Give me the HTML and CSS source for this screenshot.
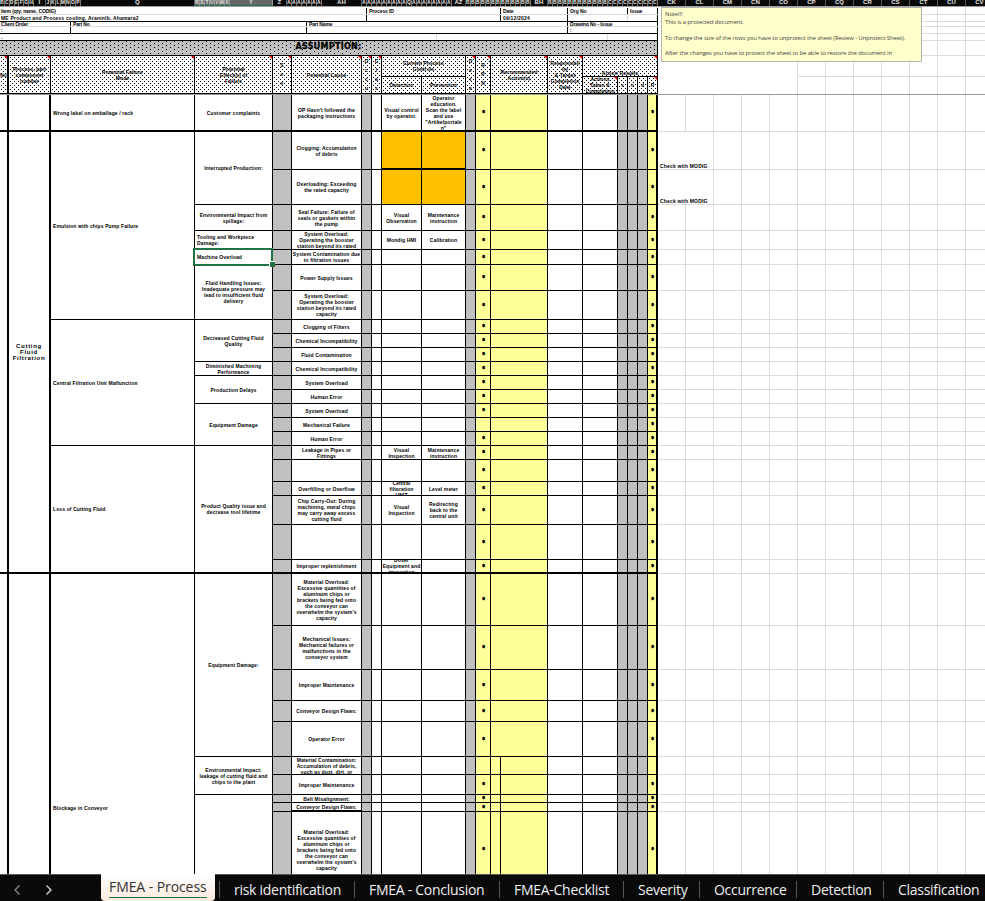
FILE: index.html
```
<!DOCTYPE html>
<html lang="en">
<head>
    <meta charset="UTF-8">
    <title>FMEA - Process</title>
    <link rel="stylesheet" href="styles.css">
</head>
<body>
    <div class="app">
        <div class="col-heads" id="col-heads"></div>

        <div class="top">
            <div class="form">
                <div class="form-row r1">
                    <div>Item (qty, name, CODIG)</div><div>Process ID</div><div>Date</div><div>Org No</div><div>Issue</div>
                </div>
                <div class="form-row r2">
                    <div class="wide">ME Product and Process cooling, Araninlb, Ahamara2</div><div></div><div class="wide">09/12/2024</div><div class="soft"></div><div></div>
                </div>
                <div class="form-row r3">
                    <div>Client Order</div><div>Part No</div><div>Part Name</div><div>Drawing No - Issue</div>
                </div>
                <div class="form-row r4">
                    <div>:</div><div></div><div></div><div>:</div>
                </div>
                <div class="form-row r5">
                    <div>.</div><div></div><div></div>
                </div>
                <div class="assumption">ASSUMPTION:</div>
                <div class="head" id="head"></div>
            </div>
            <div class="empty">
                <div class="line" style="height: 8px"></div>
                <div class="line" style="height: 7px"></div>
                <div class="line" style="height: 5px"></div>
                <div class="line" style="height: 7px"></div>
                <div class="line" style="height: 7px"></div>
                <div class="line" style="height: 15px"></div>
                <div class="line" style="height: 21px"></div>
                <div class="line last" style="height: 17px"></div>
                <div class="merged"></div>
                <div class="note">
                    <p>Note!!!</p>
                    <p>This is a protected document.</p>
                    <p class="gap">To change the size of the rows you have to unprotect the sheet (Review - Unprotect Sheet).</p>
                    <p class="gap">After the changes you have to protect the sheet to be able to restore the document in</p>
                </div>
            </div>
        </div>

        <div class="body">
            <div class="grid" id="grid"></div>
            <div class="side" id="side"></div>
        </div>

        <div class="tabs">
            <div class="arrows">
                <svg width="8" height="12" viewBox="0 0 8 12"><path d="M6.5 1.5 2 6l4.500 4.500" fill="none" stroke="#8a8a8a" stroke-width="1.300"/></svg>
                <svg width="8" height="12" viewBox="0 0 8 12"><path d="M1.500 1.500 6 6l-4.500 4.500" fill="none" stroke="#d0d0d0" stroke-width="1.400"/></svg>
            </div>
            <div class="tab active"><span>FMEA - Process</span></div>
            <div class="tab t1">risk identification</div>
            <div class="tab t2">FMEA - Conclusion</div>
            <div class="tab t3">FMEA-Checklist</div>
            <div class="tab t4">Severity</div>
            <div class="tab t5">Occurrence</div>
            <div class="tab t6">Detection</div>
            <div class="tab t7">Classification</div>
        </div>
    </div>
    <script src="script.js"></script>
</body>
</html>
```
FILE: styles.css
```
body {
    margin: 0;
    background: #fff;
    font-family: "Liberation Sans", Arial, sans-serif;
    color: #000;
}
.app {
    width: 985px;
    height: 901px;
    overflow: hidden;
    display: flex;
    flex-direction: column;
}

/* column letters */
.col-heads {
    display: flex;
    flex: none;
    height: 6px;
    overflow: hidden;
    background: #0a0a0a;
    border-bottom: 1px solid #a0a0a0;
}
.col-heads div {
    flex: none;
    box-sizing: border-box;
    height: 6px;
    overflow: hidden;
    display: flex;
    justify-content: center;
    border-right: 1px solid #555;
    color: #e4e4e4;
    font-size: 6px;
    font-weight: bold;
    line-height: 4px;
}
.col-heads .narrow {
    border-right-color: #777;
    font-size: 5px;
}
.col-heads .sel {
    background: #666;
    border-right-color: #999;
    border-bottom: 1px solid #217346;
    font-size: 5px;
}

/* frozen part */
.top {
    display: flex;
    flex: none;
    height: 87px;
    border-bottom: 1px solid #999;
}
.form {
    width: 658px;
    font-size: 5px;
    font-weight: bold;
}
.form-row {
    display: grid;
    box-sizing: border-box;
    border-bottom: 1px solid #000;
    line-height: 6px;
}
.form-row div {
    border-right: 1px solid #000;
    padding-left: 2px;
    overflow: hidden;
    white-space: nowrap;
}
.form-row div:first-child {
    padding-left: 1px;
}
.r1, .r2 {
    grid-template-columns: 367px 134px 67px 60px 30px;
}
.r3, .r4 {
    grid-template-columns: 71px 236px 261px 90px;
}
.r1 {
    height: 8px;
    border-bottom-color: #dcdcdc;
    padding-top: 1px;
    letter-spacing: -0.1px;
}
.r2 {
    height: 7px;
}
.r2 .soft {
    border-right-color: #dcdcdc;
}
.r2 .wide {
    letter-spacing: 0.2px;
}
.r3 {
    height: 5px;
    line-height: 5px;
    border-bottom-color: #dcdcdc;
    letter-spacing: -0.15px;
}
.r4 {
    height: 7px;
}
.r5 {
    height: 7px;
    grid-template-columns: 437px 171px 50px;
}
.r5 div {
    border-right-color: #dcdcdc;
}
.r5 div:last-child {
    border-right-color: #000;
}
.assumption {
    box-sizing: border-box;
    height: 15px;
    border-bottom: 1px solid #000;
    border-right: 1px solid #000;
    background-color: #c0c0c0;
    background-image:
        conic-gradient(at 1px 1px, transparent 75%, #000 0),
        conic-gradient(at 1px 1px, transparent 75%, #000 0);
    background-size: 8px 4px;
    background-position: 2px 2px, 6px 4px;
    font-size: 8px;
    font-weight: bold;
    font-family: "DejaVu Sans", sans-serif;
    line-height: 11px;
    letter-spacing: 0.3px;
    text-align: center;
    -webkit-text-stroke: 0.3px #000;
}

.head, .grid {
    display: grid;
    grid-template-columns: 9px 42px 144px 78px 19px 70px 10px 10px 40px 44px 10px 15px 57px 35px 35px 10px 10px 10px 10px;
}
.head {
    height: 38px;
    grid-template-rows: 21px 17px;
}
.cell {
    box-sizing: border-box;
    min-width: 0;
    min-height: 0;
    overflow: hidden;
    display: flex;
    align-items: center;
    justify-content: center;
    border-right: 1px solid #000;
    border-bottom: 1px solid #000;
    font-size: 5px;
    font-weight: bold;
    line-height: 6px;
    letter-spacing: 0.12px;
    text-align: center;
    white-space: pre;
}
.cell.left {
    justify-content: flex-start;
    text-align: left;
    padding-left: 2px;
}
.cell.thick {
    border-right-width: 2px;
}
.cell.heavy {
    border-bottom-width: 2px;
}
.head .cell {
    position: relative;
    background-color: #fff;
    background-image:
        conic-gradient(at 1px 1px, transparent 75%, #000 0),
        conic-gradient(at 1px 1px, transparent 75%, #000 0);
    background-size: 4px 4px;
    background-position: 1px 1px, 3px 3px;
}
.head .low {
    align-items: flex-end;
}
.head .spread {
    line-height: 9px;
}
.red::after {
    content: "";
    position: absolute;
    top: 0;
    right: 0;
    border-top: 3px solid #f00;
    border-left: 3px solid transparent;
}

/* sheet rows */
.body {
    display: flex;
    flex: none;
    height: 779px;
    overflow: hidden;
}
.grid {
    position: relative;
    flex: none;
    width: 658px;
    align-content: start;
}
.gray {
    background: #c0c0c0;
}
.yellow {
    background: #ffff99;
}
.orange {
    background: #ffc000;
}
.cell.title {
    font-size: 6px;
    letter-spacing: 0.7px;
}
.cell.zero {
    padding: 0 0 1px 1px;
    font-size: 4px;
    line-height: 4px;
    letter-spacing: 0;
    -webkit-text-stroke: 0.6px #000;
}
.split::before {
    content: "";
    align-self: stretch;
    width: 9px;
    margin-right: auto;
    border-right: 1px solid #000;
}
.cell.picked {
    position: relative;
    overflow: visible;
}
.picked::before {
    content: "";
    position: absolute;
    inset: -2px -1px -2px -2px;
    border: 2px solid #217346;
}
.picked::after {
    content: "";
    position: absolute;
    right: -3px;
    bottom: -3px;
    width: 5px;
    height: 5px;
    background: #217346;
    border: solid #fff;
    border-width: 1px 0 0 1px;
}

/* cells right of the form */
.empty, .side {
    position: relative;
    width: 327px;
    overflow: hidden;
}
.line, .side div {
    box-sizing: border-box;
    border-bottom: 1px solid #dcdcdc;
    background: repeating-linear-gradient(90deg, transparent 0 27px, #dcdcdc 27px 28px);
}
.line.last {
    border-bottom: 0;
}
.merged {
    position: absolute;
    left: 0;
    top: 0;
    width: 139px;
    height: 87px;
    background: #fff;
}
.note {
    position: absolute;
    left: 3px;
    top: 0;
    box-sizing: border-box;
    width: 261px;
    height: 55px;
    padding: 2px 3px;
    border: 1px solid #b4b4b4;
    background: #ffffcc;
    color: #444;
    font-family: "Open Sans", sans-serif;
    font-size: 6px;
    line-height: 8px;
    letter-spacing: -0.14px;
    white-space: nowrap;
}
.note p {
    margin: 0;
}
.note .gap {
    margin-top: 7.5px;
}
.side .comment {
    display: flex;
    align-items: flex-end;
    padding: 0 0 0 2px;
    background: repeating-linear-gradient(90deg, transparent 0 27px, #dcdcdc 27px 28px) 28px 0 no-repeat;
    font-size: 5px;
    font-weight: bold;
    line-height: 6px;
    letter-spacing: 0.18px;
}

/* sheet tabs */
.tabs {
    display: flex;
    flex: none;
    height: 27px;
    box-sizing: border-box;
    border-top: 1px solid #555;
    background: #0a0a0a;
    color: #f0f0f0;
    font-family: "Open Sans", "Noto Sans", sans-serif;
    font-size: 14px;
    letter-spacing: -0.28px;
}
.arrows {
    flex: none;
    width: 88px;
    padding: 3px 0 0 13px;
    display: flex;
    align-items: center;
    gap: 24px;
}
.tab {
    position: relative;
    flex: none;
    box-sizing: border-box;
    padding: 4px 0 0 15px;
    line-height: 22px;
    white-space: nowrap;
}
.tab::before {
    content: "";
    position: absolute;
    left: 0;
    top: 6px;
    height: 17px;
    border-left: 1px solid #555;
}
.tab.active {
    width: 114px;
    height: 27px;
    margin: -1px 4px 0 0;
    padding: 0 0 0 8px;
    border-radius: 0 0 4px 4px;
    background: linear-gradient(#fff, #fde9dd);
    color: #333;
    line-height: 26px;
    letter-spacing: -0.08px;
}
.tab.active::before {
    display: none;
}
.tab.active span {
    display: block;
    width: 98px;
    height: 23px;
    border-bottom: 1px solid #217346;
}
.t1 { width: 135px; }
.t2 { width: 145px; }
.t3 { width: 124px; }
.t4 { width: 76px; }
.t5 { width: 97px; }
.t6 { width: 87px; }
.t7 { width: 102px; }
```
FILE: script.js
```
const el = id => document.getElementById(id);

// column letters: [labels, width of each, extra class]
const heads = [
    ["B C D E F G H", 34 / 7, "narrow"], ["I", 12, ""], ["J K L M N O P", 5, "narrow"], ["Q", 114, ""],
    ["R S T U V W X", 5, "sel"], ["Y", 43, "sel"], ["Z", 14, ""],
    ["A A A A A A A", 5, "narrow"], ["AH", 40, ""],
    ["A A A A A A A A A Q A A A A A A A A", 5, "narrow"], ["AZ", 14, ""],
    ["B B B B B B B B B B B B B", 5, "narrow"], ["BH", 17, ""],
    ["B B B B B B B B B B B B C C C C C C C C C C", 5, "narrow"],
    ["CK CL CM CN CO CP CQ CR CS CT CU CV", 28, ""]
];
heads.forEach(([labels, width, cls]) => {
    labels.split(" ").forEach(label => {
        const div = document.createElement("div");
        div.textContent = label;
        div.className = cls;
        div.style.width = width + "px";
        el("col-heads").appendChild(div);
    });
});

function addCell(parent, row, rows, col, cols, text, cls) {
    const div = document.createElement("div");
    div.className = "cell " + (cls || "");
    div.textContent = text;
    div.style.gridArea = `${row} / ${col} / span ${rows} / span ${cols}`;
    parent.appendChild(div);
}

// table head
[
    [1, 2, 1, 1, "No", "red thick"],
    [1, 2, 2, 1, "Process, part\ncomponent\nnumber", "red"],
    [1, 2, 3, 1, "Potential Failure\nMode", "red"],
    [1, 2, 4, 1, "Potential\nEffect(s) of\nFailure", "red"],
    [1, 2, 5, 1, "S\ne\nv", "red spread"],
    [1, 2, 6, 1, "Potential Cause", "red"],
    [1, 2, 7, 1, "O\nc\nc\nu", "red spread"],
    [1, 2, 8, 1, "C\nl\na\ns", "red spread"],
    [1, 1, 9, 2, "Current Process\nControls", ""],
    [2, 1, 9, 1, "Detection", ""],
    [2, 1, 10, 1, "Prevention", ""],
    [1, 2, 11, 1, "D\ne\nt\ne", "red spread"],
    [1, 2, 12, 1, "R\nP\nN", "red spread"],
    [1, 2, 13, 1, "Recommended\nAction(s)", "red"],
    [1, 2, 14, 1, "Responsibil\nity\n& Target\nCompletion\nDate", "red"],
    [1, 1, 15, 5, "Action Results", "red low"],
    [2, 1, 15, 1, "Actions\nTaken &\nCompletion", "red"],
    [2, 1, 16, 1, "s", ""],
    [2, 1, 17, 1, "o", ""],
    [2, 1, 18, 1, "d", ""],
    [2, 1, 19, 1, "P", "red"]
].forEach(([row, rows, col, cols, text, cls]) => addCell(el("head"), row, rows, col, cols, text, cls));

// [height, cause, detection, prevention]
const rows = [
    [37, "OP Hasn't followed the\npackaging instructions", "Visual control\nby operator.", "Operator\neducation.\nScan the label\nand use\n\"Artikelportale\nn\""],
    [38, "Clogging: Accumulation\nof debris", "", ""],
    [35, "Overloading: Exceeding\nthe rated capacity", "", ""],
    [26, "Seal Failure: Failure of\nseals or gaskets within\nthe pump", "Visual\nObservation", "Maintenance\ninstruction"],
    [19, "System Overload:\nOperating the booster\nstation beyond its rated", "Mondig HMI", "Calibration"],
    [15, "System Contamination due\nto filtration issues", "", ""],
    [26, "Power Supply Issues", "", ""],
    [29, "System Overload:\nOperating the booster\nstation beyond its rated\ncapacity", "", ""],
    [14, "Clogging of Filters", "", ""],
    [14, "Chemical Incompatibility", "", ""],
    [14, "Fluid Contamination", "", ""],
    [14, "Chemical Incompatibility", "", ""],
    [14, "System Overload", "", ""],
    [14, "Human Error", "", ""],
    [14, "System Overload", "", ""],
    [14, "Mechanical Failure", "", ""],
    [14, "Human Error", "", ""],
    [14, "Leakage in Pipes or\nFittings", "Visual\nInspection", "Maintenance\ninstruction"],
    [22, "", "", ""],
    [14, "Overfilling or Overflow", "Central\nfilteration\nUNIT", "Level meter"],
    [29, "Chip Carry-Out: During\nmachining, metal chips\nmay carry away excess\ncutting fluid", "Visual\nInspection", "Redirecting\nback to the\ncentral unit"],
    [35, "", "", ""],
    [14, "Improper replenishment", "Doser\nEquipment and\ninspection", ""],
    [52, "Material Overload:\nExcessive quantities of\naluminum chips or\nbrackets being fed onto\nthe conveyor can\noverwhelm the system's\ncapacity", "", ""],
    [44, "Mechanical Issues:\nMechanical failures or\nmalfunctions in the\nconveyor system", "", ""],
    [31, "Improper Maintenance", "", ""],
    [21, "Conveyor Design Flaws:", "", ""],
    [35, "Operator Error", "", ""],
    [18, "Material Contamination:\nAccumulation of debris,\nsuch as dust, dirt, or", "", ""],
    [20, "Improper Maintenance", "", ""],
    [8, "Belt Misalignment:", "", ""],
    [9, "Conveyor Design Flaws:", "", ""],
    [76, "Material Overload:\nExcessive quantities of\naluminum chips or\nbrackets being fed onto\nthe conveyor can\noverwhelm the system's\ncapacity", "", ""],
    [154, "", "", ""]
];
const grid = el("grid");
grid.style.gridTemplateRows = rows.map(r => r[0] + "px").join(" ");

// merged cells: [first row, row count, column, text, class]
[
    [1, 1, 1, "", "thick heavy"],
    [2, 22, 1, "", "thick heavy"],
    [24, 11, 1, "", "thick"],
    [1, 1, 2, "", "thick heavy"],
    [2, 22, 2, "Cutting\nFluid\nFiltration", "thick heavy title"],
    [24, 11, 2, "", "thick"],
    [1, 1, 3, "Wrong label on emballage / rack", "left heavy"],
    [2, 7, 3, "Emulsion with chips Pump Failure", "left"],
    [9, 9, 3, "Central Filtration Unit Malfunction", "left"],
    [18, 6, 3, "Loss of Cutting Fluid", "left heavy"],
    [24, 11, 3, "Blockage in Conveyor", "left"],
    [1, 1, 4, "Customer complaints", "heavy"],
    [2, 2, 4, "Interrupted Production:", ""],
    [4, 1, 4, "Environmental Impact from\nspillage:", ""],
    [5, 1, 4, "Tooling and Workpiece\nDamage:", "left"],
    [7, 2, 4, "Fluid Handling Issues:\nInadequate pressure may\nlead to insufficient fluid\ndelivery", ""],
    [9, 3, 4, "Decreased Cutting Fluid\nQuality", ""],
    [12, 1, 4, "Diminished Machining\nPerformance", ""],
    [13, 2, 4, "Production Delays", ""],
    [15, 3, 4, "Equipment Damage", ""],
    [18, 6, 4, "Product Quality issue and\ndecrease tool lifetime", "heavy"],
    [24, 5, 4, "Equipment Damage:", ""],
    [29, 2, 4, "Environmental Impact:\nleakage of cutting fluid and\nchips to the plant", ""],
    [31, 4, 4, "", ""]
].forEach(([row, count, col, text, cls]) => addCell(grid, row, count, col, 1, text, cls));

rows.forEach(([height, cause, detection, prevention], i) => {
    const n = i + 1;
    const end = n === 1 || n === 23 ? " heavy" : "";
    const orange = n === 2 ? " orange heavy" : n === 3 ? " orange" : "";
    const rpn = n === 16 || n === 29 || n === 34 ? "" : "0";
    const total = n === 29 || n === 34 ? "" : "0";
    addCell(grid, n, 1, 5, 1, "", "gray" + end);
    addCell(grid, n, 1, 6, 1, cause, n === 32 ? "heavy" : end);
    addCell(grid, n, 1, 7, 1, "", "gray" + end);
    addCell(grid, n, 1, 8, 1, "", end);
    addCell(grid, n, 1, 9, 1, detection, end + orange);
    addCell(grid, n, 1, 10, 1, prevention, end + orange);
    addCell(grid, n, 1, 11, 1, "", "gray" + end);
    addCell(grid, n, 1, 12, 1, rpn, "yellow zero" + end);
    addCell(grid, n, 1, 13, 1, "", "yellow" + (n > 28 ? " split" : "") + end);
    addCell(grid, n, 1, 14, 1, "", end);
    addCell(grid, n, 1, 15, 1, "", end);
    addCell(grid, n, 1, 16, 1, "", "gray" + end);
    addCell(grid, n, 1, 17, 1, "", "gray" + end);
    addCell(grid, n, 1, 18, 1, "", "gray" + end);
    addCell(grid, n, 1, 19, 1, total, "yellow zero thick" + end);

    const line = document.createElement("div");
    line.style.height = height + "px";
    if (n === 2 || n === 3) {
        line.className = "comment";
        line.textContent = "Check with MODIG";
    }
    el("side").appendChild(line);
});
addCell(grid, 6, 1, 4, 1, "Machine Overload", "left picked");
```
